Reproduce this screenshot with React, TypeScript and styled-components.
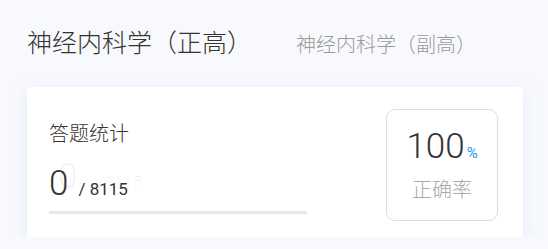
import styled, { createGlobalStyle } from "styled-components";

const GlobalStyle = createGlobalStyle`
  body {
    margin: 0;
    background: #f8f9fd;
    font-family: Roboto, "Noto Sans CJK SC", sans-serif;
  }
`;

type Level = {
  name: string;
  active?: boolean;
};

const levels: Level[] = [
  { name: "神经内科学（正高）", active: true },
  { name: "神经内科学（副高）" },
];

function App() {
  const done = 0;
  const total = 8115;
  return (
    <Page>
      <GlobalStyle />
      <Tabs>
        {levels.map((l) => (
          <Tab key={l.name} $active={l.active}>
            {l.name}
          </Tab>
        ))}
      </Tabs>
      <Card>
        <Stats>
          <Label>答题统计</Label>
          <CountRow>
            <Ghost>
              {done}
              <GhostTotal>/{total}</GhostTotal>
            </Ghost>
            <Count>{done}</Count>
            <Total>/ {total}</Total>
          </CountRow>
          <Track>
            <Fill style={{ width: `${(done / total) * 100}%` }} />
          </Track>
        </Stats>
        <RateBox>
          <RateRow>
            <Rate>100</Rate>
            <Percent>%</Percent>
          </RateRow>
          <RateLabel>正确率</RateLabel>
        </RateBox>
      </Card>
    </Page>
  );
}

export default App;

const Page = styled.div`
  padding: 0 25px 0 27px;
`;

const Tabs = styled.div`
  display: flex;
  align-items: baseline;
  gap: 44px;
  padding-top: 21px;
  height: 41px;
  margin-bottom: 25px;
`;

const Tab = styled.div<{ $active?: boolean }>`
  font-family: "Noto Sans CJK SC", sans-serif;
  font-weight: 300;
  font-size: ${(p) => (p.$active ? "25px" : "20px")};
  line-height: 40px;
  color: ${(p) => (p.$active ? "#333333" : "#999999")};
`;

const Card = styled.div`
  display: flex;
  justify-content: space-between;
  align-items: flex-start;
  background: #ffffff;
  padding: 22px 25px 16px 22px;
  box-shadow: 0 5px 14px rgba(190, 210, 240, 0.4);
`;

const Stats = styled.div`
  display: flex;
  flex-direction: column;
  width: 258px;
  padding-top: 10px;
`;

const Label = styled.div`
  font-family: "Noto Sans CJK SC", sans-serif;
  font-weight: 300;
  font-size: 20px;
  line-height: 28px;
  color: #333333;
`;

const CountRow = styled.div`
  position: relative;
  display: flex;
  align-items: baseline;
  margin-top: 17px;
  height: 40px;
`;

const Count = styled.span`
  position: relative;
  font-size: 35px;
  font-weight: 300;
  line-height: 40px;
  color: #333333;
`;

const Total = styled.span`
  position: relative;
  font-size: 17px;
  color: #333333;
  margin-left: 10px;
`;

const Ghost = styled.span`
  position: absolute;
  left: 9px;
  top: -7px;
  font-size: 35px;
  font-weight: 300;
  line-height: 40px;
  color: rgba(0, 0, 0, 0.06);
  white-space: nowrap;
`;

const GhostTotal = styled.span`
  font-size: 17px;
  margin-left: 20px;
`;

const Track = styled.div`
  margin-top: 7px;
  height: 3px;
  background: #e8e8e8;
`;

const Fill = styled.div`
  height: 100%;
  background: #1e90ff;
`;

const RateBox = styled.div`
  display: flex;
  flex-direction: column;
  align-items: center;
  justify-content: center;
  gap: 8px;
  width: 110px;
  height: 110px;
  border: 1px solid #dddddd;
  border-radius: 9px;
`;

const RateRow = styled.div`
  display: flex;
  align-items: baseline;
  height: 40px;
`;

const Rate = styled.span`
  font-size: 35px;
  font-weight: 300;
  line-height: 40px;
  color: #333333;
`;

const Percent = styled.span`
  font-size: 15px;
  color: #2196f3;
  margin-left: 2px;
`;

const RateLabel = styled.div`
  font-family: "Noto Sans CJK SC", sans-serif;
  font-weight: 300;
  font-size: 20px;
  line-height: 28px;
  color: #aaaaaa;
`;
